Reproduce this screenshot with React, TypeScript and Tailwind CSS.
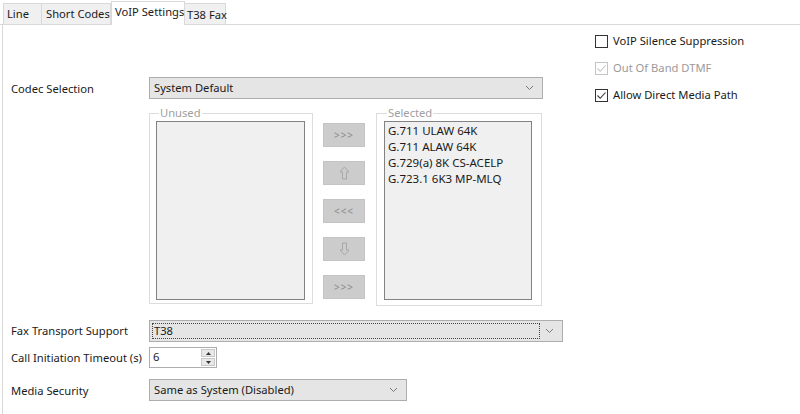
import React from "react";

const font = { fontFamily: '"Segoe UI", "Noto Sans", "Open Sans", sans-serif' };

function Chevron() {
  return (
    <svg width="9" height="6" viewBox="0 0 9 6" className="shrink-0">
      <path d="M1 1 L4.5 4.5 L8 1" fill="none" stroke="#7a7a7a" strokeWidth="1" />
    </svg>
  );
}

function ArrowIcon({ down }: { down?: boolean }) {
  return (
    <svg width="11" height="14" viewBox="0 0 11 14" className={down ? "rotate-180" : ""}>
      <path
        d="M5.5 1 L10 6 L7.5 6 L7.5 13 L3.5 13 L3.5 6 L1 6 Z"
        fill="none"
        stroke="#a8a8a8"
        strokeWidth="1"
        strokeLinejoin="miter"
      />
    </svg>
  );
}

function Check({ disabled }: { disabled?: boolean }) {
  const c = disabled ? "#c4c4c4" : "#333333";
  return (
    <svg width="11" height="11" viewBox="0 0 11 11">
      <path d="M1.5 5.5 L4.2 8.3 L9.5 2.5" fill="none" stroke={c} strokeWidth="1.1" />
    </svg>
  );
}

function CheckRow({ label, checked, disabled }: { label: string; checked?: boolean; disabled?: boolean }) {
  return (
    <div className="flex items-center h-[14px] gap-[5px]">
      <div
        className={
          "w-[13px] h-[13px] border flex items-center justify-center bg-white " +
          (disabled ? "border-[#c4c4c4]" : "border-[#333333]")
        }
      >
        {checked && <Check disabled={disabled} />}
      </div>
      <span className={"whitespace-nowrap text-[11.2px] leading-[14px] " + (disabled ? "text-[#9a9a9a]" : "text-[#1a1a1a]")}>{label}</span>
    </div>
  );
}

function MoveButton({ children }: { children: React.ReactNode }) {
  return (
    <div className="w-[42px] h-[24px] bg-[#cccccc] border border-[#c4c4c4] flex items-center justify-center text-[10px] text-[#8a8a8a] tracking-[1px] leading-none">
      {children}
    </div>
  );
}

export default function App() {
  return (
    <div className="w-[800px] h-[414px] bg-white overflow-hidden text-[#1a1a1a] text-[11.2px]" style={font}>
      {/* Tabs */}
      <div className="h-[25px] flex items-end pl-[3px] border-b border-[#d9d9d9] bg-white whitespace-nowrap">
        <div className="h-[21px] w-[39px] bg-[#f0f0f0] border border-b-0 border-[#d9d9d9] leading-[20px] pl-[3px]">Line</div>
        <div className="h-[21px] w-[69px] bg-[#f0f0f0] border border-b-0 border-l-0 border-[#d9d9d9] leading-[20px] pl-[4px]">Short Codes</div>
        <div className="h-[24px] w-[74px] bg-white border border-b-0 border-[#d9d9d9] leading-[20px] pl-[3px] -mb-[1px] relative">VoIP Settings</div>
        <div className="h-[21px] w-[41px] bg-[#f0f0f0] border border-b-0 border-l-0 border-[#d9d9d9] leading-[21px] pl-[2px]">T38 Fax</div>
      </div>
      {/* Panel */}
      <div className="ml-[2px] border-l border-[#d9d9d9] h-[389px] flex">
        {/* Left */}
        <div className="w-[592px] pl-[8px] pt-[52px] flex flex-col whitespace-nowrap">
          {/* Codec row */}
          <div className="flex items-center h-[22px]">
            <div className="w-[138px] pt-[3px]">Codec Selection</div>
            <div className="w-[394px] h-[22px] bg-[#e5e5e5] border border-[#adadad] flex items-center justify-between pl-[4px] pr-[8px]">
              <span>System Default</span>
              <Chevron />
            </div>
          </div>
          {/* Groups */}
          <div className="flex ml-[138px] mt-[7px] items-start">
            <fieldset className="w-[164px] border border-[#dcdcdc] pl-[6px] pr-[7px] pt-[1px] pb-[3px] m-0">
              <legend className="ml-[3px] px-[1px] leading-[14px] text-[#a0a0a0]">Unused</legend>
              <div className="w-[149px] h-[179px] bg-[#f0f0f0] border border-[#828282]" />
            </fieldset>
            <div className="flex flex-col gap-[14px] ml-[10px] mt-[17px]">
              <MoveButton>&gt;&gt;&gt;</MoveButton>
              <MoveButton><ArrowIcon /></MoveButton>
              <MoveButton>&lt;&lt;&lt;</MoveButton>
              <MoveButton><ArrowIcon down /></MoveButton>
              <MoveButton>&gt;&gt;&gt;</MoveButton>
            </div>
            <fieldset className="w-[166px] ml-[11px] border border-[#dcdcdc] pl-[7px] pr-[9px] pt-[1px] pb-[5px] m-0">
              <legend className="ml-[3px] px-[1px] leading-[14px] text-[#a0a0a0]">Selected</legend>
              <div className="w-[148px] h-[179px] bg-[#f0f0f0] border border-[#828282] px-[3px] pt-[1px] text-[11.5px] leading-[16px]">
                <div>G.711 ULAW 64K</div>
                <div>G.711 ALAW 64K</div>
                <div>G.729(a) 8K CS-ACELP</div>
                <div>G.723.1 6K3 MP-MLQ</div>
              </div>
            </fieldset>
          </div>
          {/* Fax row */}
          <div className="flex items-center h-[22px] mt-[14px]">
            <div className="w-[138px]">Fax Transport Support</div>
            <div className="w-[414px] h-[22px] bg-[#e5e5e5] border border-[#adadad] flex items-center pl-[2px] pr-[8px]">
              <div className="flex-1 h-[16px] border border-dotted border-[#444] pl-[1px] leading-[14px]">T38</div>
              <div className="ml-[5px]"><Chevron /></div>
            </div>
          </div>
          {/* Timeout row */}
          <div className="flex items-center h-[21px] mt-[5px]">
            <div className="w-[138px] pt-[2px]">Call Initiation Timeout (s)</div>
            <div className="w-[68px] h-[21px] bg-white border border-[#adadad] flex items-center justify-between pl-[3px] pr-[1px]">
              <span>6</span>
              <div className="flex flex-col w-[14px] h-[17px] gap-[1px]">
                <div className="flex-1 bg-[#e8e8e8] border border-[#c8c8c8] flex items-center justify-center">
                  <svg width="5" height="3" viewBox="0 0 5 3"><path d="M0 3 L2.5 0 L5 3 Z" fill="#333" /></svg>
                </div>
                <div className="flex-1 bg-[#e8e8e8] border border-[#c8c8c8] flex items-center justify-center">
                  <svg width="5" height="3" viewBox="0 0 5 3"><path d="M0 0 L2.5 3 L5 0 Z" fill="#333" /></svg>
                </div>
              </div>
            </div>
          </div>
          {/* Media security */}
          <div className="flex items-center h-[22px] mt-[11px]">
            <div className="w-[138px] pt-[2px]">Media Security</div>
            <div className="w-[258px] h-[22px] bg-[#e5e5e5] border border-[#adadad] flex items-center justify-between pl-[4px] pr-[8px]">
              <span>Same as System (Disabled)</span>
              <Chevron />
            </div>
          </div>
        </div>
        {/* Right */}
        <div className="pt-[9px] flex flex-col gap-[13px]">
          <CheckRow label="VoIP Silence Suppression" />
          <CheckRow label="Out Of Band DTMF" checked disabled />
          <CheckRow label="Allow Direct Media Path" checked />
        </div>
      </div>
    </div>
  );
}
